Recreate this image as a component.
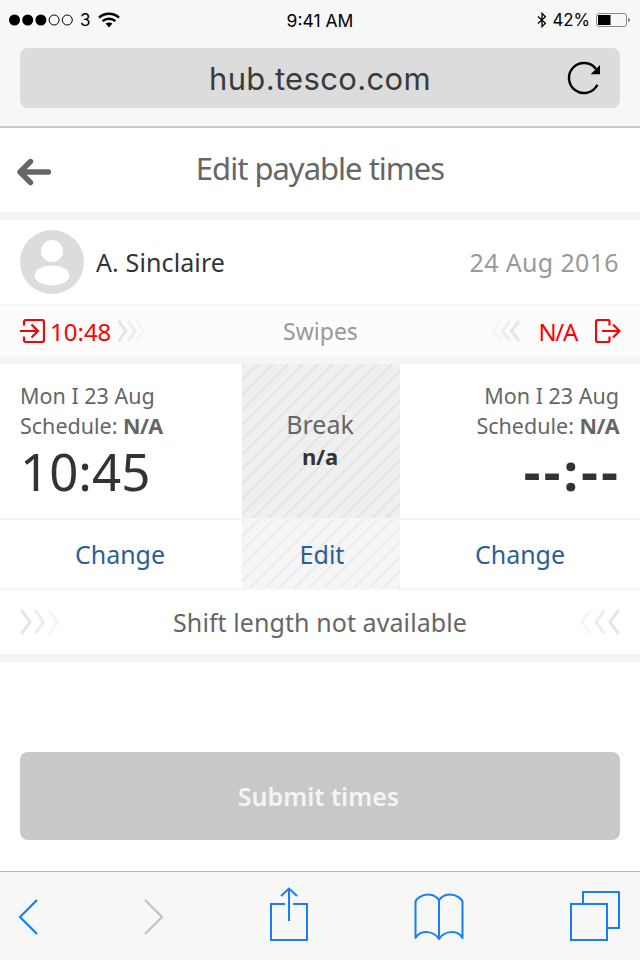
<div class="page">
  <div class="chrome">
    <div class="status">
      <div class="st-left">
        <svg width="66" height="14" viewBox="0 0 66 14" class="dots">
          <circle cx="6.500" cy="7" r="5.500" fill="#000"/>
          <circle cx="19.700" cy="7" r="5.500" fill="#000"/>
          <circle cx="32.900" cy="7" r="5.500" fill="#000"/>
          <circle cx="46.100" cy="7" r="5" fill="none" stroke="#000" stroke-width="1"/>
          <circle cx="59.300" cy="7" r="5" fill="none" stroke="#000" stroke-width="1"/>
        </svg>
        <span class="carrier">3</span>
        <svg width="22" height="16" viewBox="0 0 22 16" class="wifi">
          <path d="M1 5.600C6.600 .4 15.400 .4 21 5.600" fill="none" stroke="#000" stroke-width="2.400"/>
          <path d="M4.600 9.200C8.200 5.900 13.800 5.900 17.400 9.200" fill="none" stroke="#000" stroke-width="2.400"/>
          <path d="M7.600 11.600C9.600 10 12.400 10 14.400 11.600L11 15.400Z" fill="#000"/>
        </svg>
      </div>
      <div class="clock">9:41 AM</div>
      <div class="st-right">
        <svg width="10" height="16" viewBox="0 0 10 16" class="bt">
          <path d="M1 4.400L8.400 11.200L5 14.600V1.400L8.400 4.800L1 11.600" fill="none" stroke="#000" stroke-width="1.300"/>
        </svg>
        <span class="pct">42%</span>
        <svg width="35" height="16" viewBox="0 0 35 16" class="batt">
          <rect x=".5" y="1.500" width="30" height="13" rx="2.500" fill="none" stroke="#8a8a8a"/>
          <rect x="2" y="3" width="12.500" height="10" fill="#000"/>
          <path d="M32.500 6a2.400 2.400 0 0 1 0 4Z" fill="#000"/>
        </svg>
      </div>
    </div>
    <div class="url">
      <span class="url-text">hub.tesco.com</span>
      <svg class="reload" width="34" height="34" viewBox="0 0 34 34">
        <path d="M31.400 23.700A15 15 0 1 1 30 8" fill="none" stroke="#000" stroke-width="2.400"/>
        <path d="M24.700 13.300L34 4V13.300Z" fill="#000"/>
      </svg>
    </div>
  </div>

  <header class="head">
    <svg class="back" width="36" height="28" viewBox="0 0 36 28">
      <path d="M32.500 14H4M14.500 3.500L4 14L14.500 24.500" fill="none" stroke="#666" stroke-width="5.400" stroke-linecap="round" stroke-linejoin="round"/>
    </svg>
    <h1>Edit payable times</h1>
  </header>

  <div class="user">
    <div class="who">
      <svg width="64" height="64" viewBox="0 0 64 64">
        <circle cx="32" cy="32" r="32" fill="#dcdcdc"/>
        <ellipse cx="32" cy="21" rx="11" ry="11" fill="#fff"/>
        <ellipse cx="32" cy="45.500" rx="17.500" ry="10" fill="#fff"/>
      </svg>
      <span class="name">A. Sinclaire</span>
    </div>
    <span class="date">24 Aug 2016</span>
  </div>

  <div class="swipes">
    <div class="sw-side">
      <svg width="25" height="24" viewBox="0 0 25 24" class="inout">
        <path d="M4 6.500V3A2 2 0 0 1 6 1H22A2 2 0 0 1 24 3V21A2 2 0 0 1 22 23H6A2 2 0 0 1 4 21V17.500" fill="none" stroke="#f00" stroke-width="2.200"/>
        <path d="M0 12H17M11.500 5.500L18 12L11.500 18.500" fill="none" stroke="#f00" stroke-width="2.200"/>
      </svg>
      <span class="red t">10:48</span>
      <svg width="28" height="24" viewBox="0 0 28 24" class="chev">
        <path d="M1.500 2L9 12L1.500 22" fill="none" stroke="#dfe6ec" stroke-width="3"/>
        <path d="M11 2L18.500 12L11 22" fill="none" stroke="#e9eef2" stroke-width="3"/>
        <path d="M19.500 2L27 12L19.500 22" fill="none" stroke="#f3f5f7" stroke-width="3"/>
      </svg>
    </div>
    <span class="sw-label">Swipes</span>
    <div class="sw-side">
      <svg width="28" height="24" viewBox="0 0 28 24" class="chev l">
        <path d="M9 2L1.500 12L9 22" fill="none" stroke="#f3f5f7" stroke-width="3"/>
        <path d="M18 2L10.500 12L18 22" fill="none" stroke="#e9eef2" stroke-width="3"/>
        <path d="M27 2L19.500 12L27 22" fill="none" stroke="#dfe6ec" stroke-width="3"/>
      </svg>
      <span class="red na">N/A</span>
      <svg width="26" height="24" viewBox="0 0 26 24" class="out">
        <path d="M14.500 6.500V2.500A1.500 1.500 0 0 0 13 1H3A2 2 0 0 0 1 3V21A2 2 0 0 0 3 23H13A1.500 1.500 0 0 0 14.500 21.500V17.500" fill="none" stroke="#f00" stroke-width="2.200"/>
        <path d="M7 12H24M18 5.500L24.500 12L18 18.500" fill="none" stroke="#f00" stroke-width="2.200"/>
      </svg>
    </div>
  </div>

  <div class="times">
    <div class="col">
      <div class="ln">Mon I 23 Aug</div>
      <div class="ln">Schedule: <b>N/A</b></div>
      <div class="big">10:45</div>
    </div>
    <div class="mid">
      <div class="brk">Break</div>
      <div class="brkv">n/a</div>
    </div>
    <div class="col right">
      <div class="ln">Mon I 23 Aug</div>
      <div class="ln">Schedule: <b>N/A</b></div>
      <div class="big dash">--:--</div>
    </div>
  </div>

  <div class="actions">
    <a href="#c1">Change</a>
    <a href="#e" class="edit">Edit</a>
    <a href="#c2">Change</a>
  </div>

  <div class="shift">
    <svg width="40" height="30" viewBox="0 0 40 30">
      <path d="M1.500 3L10 15L1.500 27" fill="none" stroke="#dfe6ec" stroke-width="3"/>
      <path d="M15 3L23.500 15L15 27" fill="none" stroke="#e9eef2" stroke-width="3"/>
      <path d="M29 3L37.500 15L29 27" fill="none" stroke="#f3f5f7" stroke-width="3"/>
    </svg>
    <span>Shift length not available</span>
    <svg width="40" height="30" viewBox="0 0 40 30">
      <path d="M10.500 3L2 15L10.500 27" fill="none" stroke="#f3f5f7" stroke-width="3"/>
      <path d="M24.500 3L16 15L24.500 27" fill="none" stroke="#e9eef2" stroke-width="3"/>
      <path d="M38.500 3L30 15L38.500 27" fill="none" stroke="#dfe6ec" stroke-width="3"/>
    </svg>
  </div>

  <div class="fill">
    <button class="submit" type="button">Submit times</button>
  </div>

  <nav class="bar">
    <svg class="prev" width="20" height="36" viewBox="0 0 20 36"><path d="M19 1L2 18L19 35" fill="none" stroke="#157efb" stroke-width="2.200"/></svg>
    <svg class="fwd" width="20" height="36" viewBox="0 0 20 36"><path d="M1 1L18 18L1 35" fill="none" stroke="#c4c4c4" stroke-width="2.200"/></svg>
    <svg class="share" width="38" height="56" viewBox="0 0 38 56">
      <path d="M15 17H1V53H37V17H23" fill="none" stroke="#157efb" stroke-width="2"/>
      <path d="M19 34V1.500M11 9L19 1.500L27 9" fill="none" stroke="#157efb" stroke-width="2"/>
    </svg>
    <svg class="book" width="50" height="48" viewBox="0 0 50 48">
      <path d="M25 46C20 38 7 36 1.500 45V9C1.500 6 8 1.500 14 1.500C20 1.500 25 5 25 9C25 5 30 1.500 36 1.500C42 1.500 48.500 6 48.500 9V45C43 36 30 38 25 46V9" fill="none" stroke="#157efb" stroke-width="2" stroke-linejoin="round"/>
    </svg>
    <svg class="tabs" width="50" height="50" viewBox="0 0 50 50">
      <path d="M13 12V1H49V37H38" fill="none" stroke="#157efb" stroke-width="2"/>
      <rect x="1" y="13" width="36" height="36" fill="none" stroke="#157efb" stroke-width="2"/>
    </svg>
  </nav>
</div>

<style>
  :global(body) { margin: 0; background: #fff; }
  .page {
    width: 640px; height: 960px; display: flex; flex-direction: column;
    font-family: "Noto Sans", "Open Sans", sans-serif; color: #666; overflow: hidden;
  }
  .chrome { height: 126px; background: #f7f7f7; border-bottom: 2px solid #cbcbcb; flex: none; }
  .status {
    height: 40px; display: grid; grid-template-columns: 1fr auto 1fr; align-items: center;
    font-family: Inter, "Liberation Sans", sans-serif; font-size: 17px; color: #000;
  }
  .st-left, .st-right { display: flex; align-items: center; }
  .st-left { padding-left: 8px; }
  .carrier { margin-left: 6px; }
  .wifi { margin-left: 7px; }
  .clock { font-size: 17.500px; }
  .st-right { justify-content: flex-end; padding-right: 9px; }
  .pct { margin: 0 6px 0 5px; font-size: 16.800px; }
  .url {
    margin: 8px 20px 0; height: 60px; background: #dcdcdc; border-radius: 8px; position: relative;
    display: flex; align-items: center; justify-content: center;
  }
  .url-text { font-family: Inter, sans-serif; font-size: 31px; color: #3a3a3a; letter-spacing: .35px; }
  .reload { position: absolute; right: 20px; top: 13px; }
  .head {
    height: 84px; flex: none; display: flex; align-items: center; justify-content: center; position: relative;
    border-bottom: 8px solid #f5f5f5;
  }
  .back { position: absolute; left: 16px; top: 30px; }
  h1 { margin: 0 0 4px; font-weight: 400; font-size: 31px; letter-spacing: -1px; color: #666; }
  .user {
    height: 84px; flex: none; padding: 0 21px 0 20px; display: flex; align-items: center; justify-content: space-between;
    border-bottom: 2px solid #f5f5f5;
  }
  .who { display: flex; align-items: center; gap: 12px; }
  .name { font-size: 25px; color: #333; letter-spacing: .12px; }
  .date { font-size: 25px; color: #999; letter-spacing: .35px; }
  .swipes {
    height: 50px; flex: none; background: #fcfcfc; border-bottom: 8px solid #f5f5f5; padding: 0 19px 0 20px;
    display: flex; align-items: center; justify-content: space-between; position: relative;
  }
  .sw-side { display: flex; align-items: center; }
  .red { color: #f00; font-size: 24px; }
  .t { margin-left: 5px; }
  .na { letter-spacing: -1.300px; }
  .chev { margin-left: 6px; }
  .chev.l { margin: 0 18px 0 0; }
  .out { margin-left: 18px; }
  .sw-label { font-size: 23px; color: #999; position: absolute; left: 0; right: 0; text-align: center; padding-left: 1px; }
  .times { height: 154px; flex: none; display: grid; grid-template-columns: 242px 158px 240px; }
  .col { padding: 17px 20px 0; }
  .col.right { text-align: right; padding-right: 21px; }
  .ln { font-size: 21.500px; line-height: 30px; color: #666; white-space: nowrap; }
  .ln b { font-weight: 700; letter-spacing: -.6px; }
  .big { font-size: 51px; line-height: 56px; color: #333; margin-top: 2px; }
  .dash { font-weight: 700; font-size: 52px; letter-spacing: 3.200px; margin-right: -2px; }
  .mid {
    background-color: #f0f0f0;
    background-image: repeating-linear-gradient(135deg, #e4e4e4 0, #e4e4e4 1.500px, #f0f0f0 3px, #f0f0f0 10.500px);
    text-align: center; padding: 43px 2px 0 0;
  }
  .brk { font-size: 25px; line-height: 34px; color: #666; }
  .brkv { font-size: 22px; line-height: 30px; font-weight: 700; color: #333; letter-spacing: -.2px; }
  .actions {
    height: 68px; flex: none; display: grid; grid-template-columns: 242px 158px 240px;
    border-top: 2px solid #f5f5f5; border-bottom: 2px solid #f5f5f5; box-sizing: content-box;
  }
  .actions a { display: flex; align-items: center; justify-content: center; font-size: 25px; color: #2e5e96; text-decoration: none; padding-right: 2px; }
  .actions .edit {
    padding: 0 0 0 2px; background-color: #f6f6f6;
    background-image: repeating-linear-gradient(135deg, #ececec 0, #ececec 1.500px, #f6f6f6 3px, #f6f6f6 10.500px);
  }
  .actions a:last-child { padding: 0; }
  .shift {
    height: 64px; flex: none; padding: 0 20px; display: flex; align-items: center; justify-content: space-between;
    border-bottom: 8px solid #f5f5f5; font-size: 25px; color: #666; letter-spacing: .08px;
  }
  .fill { flex: 1; padding: 90px 20px 0; }
  .submit {
    width: 100%; height: 88px; background: #c8c8c8; border: 0; border-radius: 8px; color: #f4f4f4;
    font-family: inherit; font-size: 25px; font-weight: 600; padding: 0 3px 0 0;
  }
  .bar {
    height: 88px; flex: none; background: #f7f7f7; border-top: 1px solid #b6b6b6; padding: 0 0 0 18px;
    display: flex; align-items: flex-start;
  }
  .prev { margin-top: 27px; }
  .fwd { margin: 27px 0 0 106px; }
  .share { margin: 15px 0 0 106px; }
  .book { margin: 21px 0 0 106px; }
  .tabs { margin: 19px 0 0 106px; }
</style>
